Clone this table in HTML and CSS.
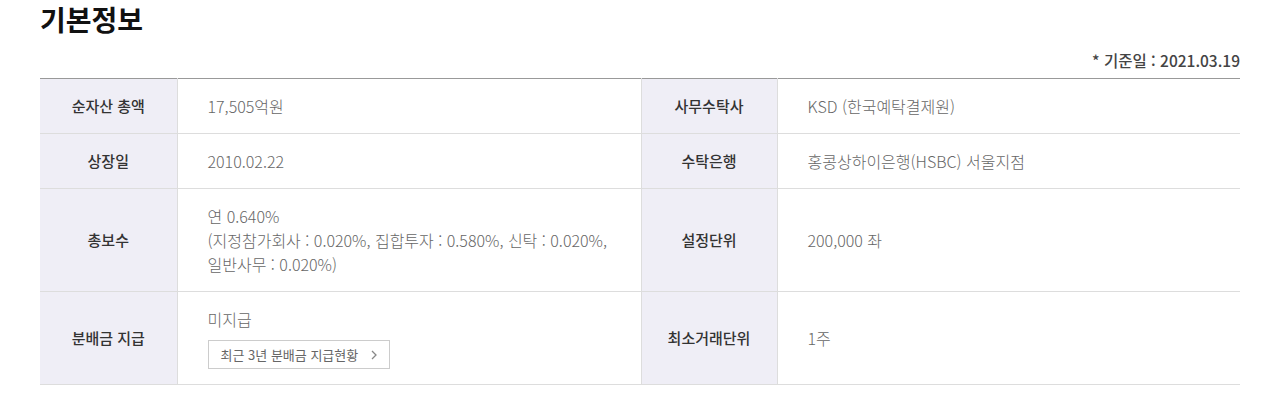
FILE: index.html
```html
<!DOCTYPE html>
<html lang="ko">
  <head>
    <meta charset="UTF-8" />
    <meta name="viewport" content="width=device-width, initial-scale=1.0" />
    <title>기본정보</title>
    <link rel="stylesheet" href="styles.css">
  </head>
  <body>
    <div class="section">
      <h2 class="title">기본정보</h2>
      <p class="base-date">* 기준일 : 2021.03.19</p>

      <table class="info-table">
        <colgroup>
          <col class="col-th">
          <col class="col-td">
          <col class="col-th2">
          <col class="col-td2">
        </colgroup>
        <tbody>
          <tr>
            <th>순자산 총액</th>
            <td>17,505억원</td>
            <th>사무수탁사</th>
            <td>KSD (한국예탁결제원)</td>
          </tr>
          <tr>
            <th>상장일</th>
            <td>2010.02.22</td>
            <th>수탁은행</th>
            <td>홍콩상하이은행(HSBC) 서울지점</td>
          </tr>
          <tr>
            <th>총보수</th>
            <td>
              연 0.640%<br>
              (지정참가회사 : 0.020%, 집합투자 : 0.580%, 신탁 : 0.020%,<br>
              일반사무 : 0.020%)
            </td>
            <th>설정단위</th>
            <td>200,000 좌</td>
          </tr>
          <tr>
            <th>분배금 지급</th>
            <td>
              <div>미지급</div>
              <button type="button" class="link-btn">
                최근 3년 분배금 지급현황
                <svg width="6" height="10" viewBox="0 0 6 10">
                  <path d="M1 1l4 4-4 4" fill="none" stroke="#888" stroke-width="1.3"/>
                </svg>
              </button>
            </td>
            <th>최소거래단위</th>
            <td>1주</td>
          </tr>
        </tbody>
      </table>
    </div>
  </body>
</html>
```

FILE: styles.css
```css
body {
  margin: 0;
  padding: 0;
  font-family: "Noto Sans CJK KR", "Noto Sans", sans-serif;
  background-color: #fff;
  color: #333;
}

.section {
  width: 1200px;
  padding-left: 40px;
}

.title {
  margin: 0;
  font-size: 28px;
  line-height: 38px;
  font-weight: 700;
  color: #111;
}

.base-date {
  margin: 12px 0 8px;
  text-align: right;
  font-size: 15.5px;
  line-height: 20px;
  font-weight: 500;
  color: #444;
}

.info-table {
  width: 1200px;
  border-collapse: collapse;
  table-layout: fixed;
  border-top: 1px solid #999;
}

.col-th {
  width: 137px;
}

.col-td {
  width: 464px;
}

.col-th2 {
  width: 136px;
}

.col-td2 {
  width: 463px;
}

.info-table tr {
  border-bottom: 1px solid #ddd;
}

.info-table th {
  background-color: #efeef6;
  font-size: 15px;
  line-height: 24px;
  font-weight: 500;
  color: #333;
  padding: 15px 10px;
  text-align: center;
  border-right: 1px solid #ddd;
}

.info-table td {
  font-size: 16px;
  line-height: 24px;
  font-weight: 300;
  color: #666;
  padding: 15px 30px;
  text-align: left;
}

.info-table td + th {
  border-left: 1px solid #ddd;
}

.link-btn {
  display: inline-flex;
  align-items: center;
  gap: 13px;
  height: 29px;
  margin-top: 9px;
  padding: 0 12px;
  border: 1px solid #ccc;
  background-color: #fff;
  font-family: inherit;
  font-size: 13px;
  font-weight: 400;
  color: #666;
  cursor: pointer;
  vertical-align: top;
}

.link-btn svg {
  display: block;
}
```
